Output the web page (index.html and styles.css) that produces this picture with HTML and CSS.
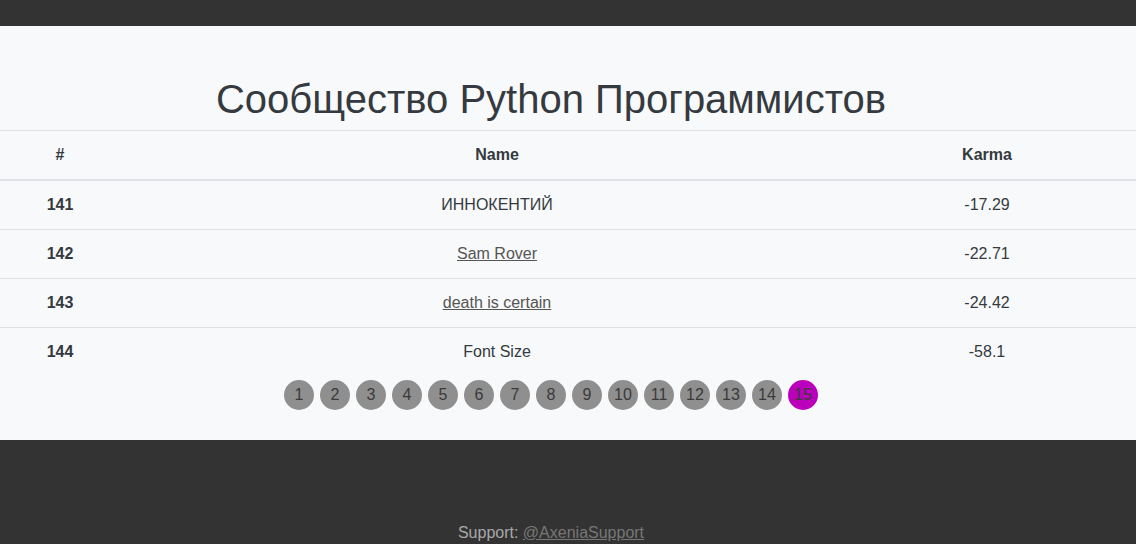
FILE: index.html
```html
<!DOCTYPE html>
<html lang="ru">
<head>
<meta charset="utf-8">
<title>Сообщество Python Программистов</title>
<link rel="stylesheet" href="styles.css">
</head>
<body>
<header class="topbar"></header>
<main class="content">
  <h1 class="title">Сообщество Python Программистов</h1>
  <table class="rating">
    <colgroup>
      <col class="c-num">
      <col class="c-name">
      <col class="c-karma">
    </colgroup>
    <thead>
      <tr><th>#</th><th>Name</th><th class="karma">Karma</th></tr>
    </thead>
    <tbody>
      <tr><th>141</th><td>ИННОКЕНТИЙ</td><td class="karma">-17.29</td></tr>
      <tr><th>142</th><td><a href="#">Sam Rover</a></td><td class="karma">-22.71</td></tr>
      <tr><th>143</th><td><a href="#">death is certain</a></td><td class="karma">-24.42</td></tr>
      <tr><th>144</th><td>Font Size</td><td class="karma">-58.1</td></tr>
    </tbody>
  </table>
  <nav class="pager">
    <a class="page" href="#">1</a>
    <a class="page" href="#">2</a>
    <a class="page" href="#">3</a>
    <a class="page" href="#">4</a>
    <a class="page" href="#">5</a>
    <a class="page" href="#">6</a>
    <a class="page" href="#">7</a>
    <a class="page" href="#">8</a>
    <a class="page" href="#">9</a>
    <a class="page" href="#">10</a>
    <a class="page" href="#">11</a>
    <a class="page" href="#">12</a>
    <a class="page" href="#">13</a>
    <a class="page" href="#">14</a>
    <a class="page active" href="#">15</a>
  </nav>
</main>
<footer class="footer">
  <p class="support">Support: <a href="#">@AxeniaSupport</a></p>
</footer>
</body>
</html>
```

FILE: styles.css
```css
* { box-sizing: border-box; }
html, body {
  margin: 0;
  padding: 0;
}
body {
  font-family: "Liberation Sans", Arial, sans-serif;
  font-size: 16px;
  line-height: 24px;
  color: #343a40;
  background: #333333;
  height: 544px;
  overflow: hidden;
}
.topbar {
  height: 26px;
  background: #333333;
}
.content {
  background: #f8f9fa;
  padding-top: 49px;
  height: 414px;
}
.title {
  margin: 0 0 7px;
  padding-right: 34px;
  font-size: 40px;
  line-height: 48px;
  font-weight: 400;
  text-align: center;
  color: #343a40;
}
.rating {
  width: 100%;
  border-collapse: collapse;
  table-layout: fixed;
}
.c-num { width: 120px; }
.c-name { width: 754px; }
.c-karma { width: 262px; }
.rating th, .rating td {
  text-align: center;
  padding: 12px;
  border-top: 1px solid #dee2e6;
  vertical-align: top;
}
.rating .karma { padding-right: 48px; }
.rating thead th {
  border-bottom: 2px solid #dee2e6;
  padding-top: 12px;
  padding-bottom: 12px;
}
.rating tbody tr:first-child th,
.rating tbody tr:first-child td { border-top: none; }
.rating a {
  color: #555555;
  text-decoration: underline;
}
.pager {
  display: flex;
  justify-content: center;
  gap: 6px;
  padding-top: 4px;
  padding-right: 34px;
}
.page {
  width: 30px;
  height: 30px;
  border-radius: 50%;
  background: #8f8f8f;
  color: #3a3a3a;
  text-decoration: none;
  display: flex;
  align-items: center;
  justify-content: center;
  font-size: 16px;
}
.page.active { background: #bb00bb; }
.footer {
  height: 104px;
  background: #333333;
  padding-top: 81px;
  padding-right: 34px;
}
.support {
  margin: 0;
  text-align: center;
  color: #a8a8a8;
  line-height: 24px;
}
.support a {
  color: #777777;
  text-decoration: underline;
}
```
